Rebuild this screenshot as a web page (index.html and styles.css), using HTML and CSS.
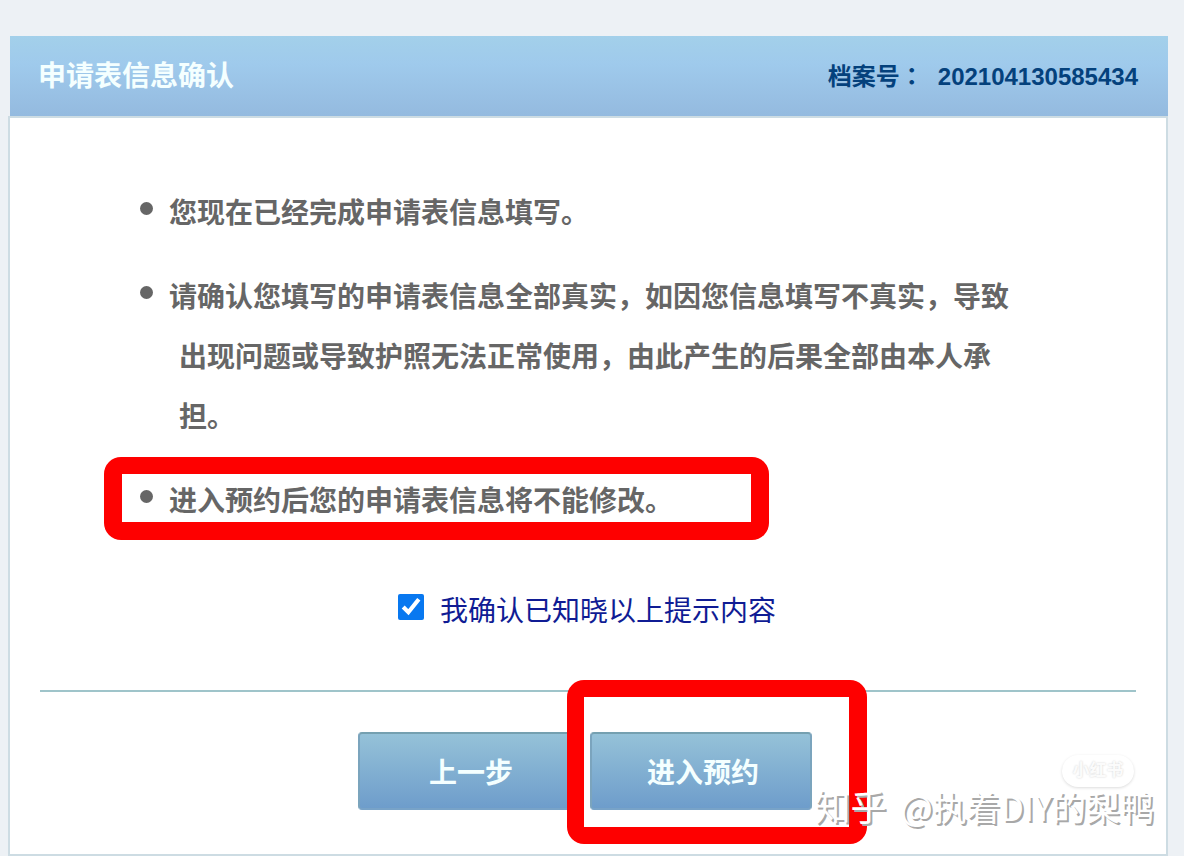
FILE: index.html
```html
<!DOCTYPE html>
<html lang="zh-CN">

<head>
	<meta charset="utf-8">
	<meta name="viewport" content="width=device-width, initial-scale=1">
	<title>申请表信息确认</title>
	<link rel="stylesheet" href="styles.css">
</head>

<body>
	<div class="header">
		<h1>申请表信息确认</h1>
		<div class="fileNo">档案号<span class="colon" lang="zh-TW">：</span>202104130585434</div>
	</div>

	<div class="content">
		<ul class="notice">
			<li>您现在已经完成申请表信息填写。</li>
			<li>请确认您填写的申请表信息全部真实，如因您信息填写不真实，导致出现问题或导致护照无法正常使用，由此产生的后果全部由本人承担。</li>
			<li class="marked">进入预约后您的申请表信息将不能修改。
				<svg class="mark markLine" viewBox="0 0 665 83"><path fill-rule="evenodd" d="M17 0H648A17 17 0 0 1 665 17V66A17 17 0 0 1 648 83H17A17 17 0 0 1 0 66V17A17 17 0 0 1 17 0ZM18 17V65H647V17Z" /></svg>
			</li>
		</ul>

		<div class="confirm">
			<input type="checkbox" id="agree" checked>
			<label for="agree">我确认已知晓以上提示内容</label>
		</div>

		<div class="buttons">
			<button type="button">上一步</button>
			<div class="marked">
				<button type="button">进入预约</button>
				<svg class="mark markButton" viewBox="0 0 300 164"><path fill-rule="evenodd" d="M17 0H283A17 17 0 0 1 300 17V147A17 17 0 0 1 283 164H17A17 17 0 0 1 0 147V17A17 17 0 0 1 17 0ZM17 17V147H282V17Z" /></svg>
			</div>
		</div>

		<div class="badge">小红书</div>
		<div class="watermark"><span class="site">知乎</span>@执着DIY的梨鸭</div>
	</div>
</body>

</html>
```

FILE: styles.css
```css
* {
	box-sizing: border-box;
}

body {
	margin: 36px 16px 0 8px;
	background-color: #edf1f5;
	font-family: "Liberation Sans", "Noto Sans CJK SC", sans-serif;
	font-size: 28px;
	color: #666666;
}

.header {
	display: flex;
	align-items: center;
	justify-content: space-between;
	height: 80px;
	margin-left: 2px;
	padding: 0 30px 0 28px;
	background: linear-gradient(to bottom, #a3d0ea 0%, #9fcaec 35%, #94badf 100%);
}

h1 {
	margin: 0;
	font-size: 28px;
	line-height: 42px;
	padding-top: 2px;
	color: #f4ffff;
}

.fileNo {
	font-size: 24px;
	font-weight: bold;
	line-height: 40px;
	color: #04417c;
}

/* the TC face centres the full-width colon */
.colon {
	margin-right: 14px;
	font-family: "Noto Sans CJK TC", sans-serif;
}

.content {
	position: relative;
	padding: 66px 30px 44px;
	border: 2px solid #cddce3;
	background-color: #ffffff;
}

.notice {
	margin: 0;
	padding: 0 116px 0 139px;
	list-style: none;
	font-weight: bold;
	line-height: 60px;
}

.notice li {
	position: relative;
	margin-bottom: 24px;
	text-indent: -10px;
}

.notice li::before {
	content: "";
	position: absolute;
	top: 18px;
	left: -39px;
	width: 13px;
	height: 13px;
	border-radius: 50%;
	background-color: #666666;
}

.confirm {
	display: flex;
	align-items: center;
	justify-content: center;
	gap: 16px;
	margin-top: 56px;
	padding-right: 2px;
	line-height: 48px;
	color: #101c94;
}

.confirm input {
	width: 26px;
	height: 26px;
	margin: 0 0 10px;
	accent-color: #0878f0;
}

.buttons {
	display: flex;
	justify-content: center;
	gap: 10px;
	margin-top: 54px;
	padding: 40px 6px 0 0;
	border-top: 2px solid #9fc4ca;
}

button {
	display: block;
	width: 222px;
	height: 78px;
	padding: 0 0 0 4px;
	border: 2px solid;
	border-color: #75a0b0 #7ba4bd #78a3c8 #7ba4bd;
	border-radius: 4px;
	background: linear-gradient(to bottom, #95c2d8, #6e9dcb);
	font: bold 28px "Liberation Sans", "Noto Sans CJK SC", sans-serif;
	color: #f4ffff;
	cursor: pointer;
}

.marked {
	position: relative;
}

/* red highlight frames */
.mark {
	position: absolute;
	fill: #fe0000;
	pointer-events: none;
}

.markLine {
	top: -15px;
	left: -75px;
	width: 665px;
	height: 83px;
}

.markButton {
	top: -52px;
	left: -23px;
	width: 300px;
	height: 164px;
}

.badge {
	position: absolute;
	right: 32px;
	bottom: 67px;
	width: 72px;
	border-radius: 16px;
	box-shadow: 0 1px 3px #dcdcdc;
	font-size: 17px;
	font-weight: bold;
	line-height: 32px;
	text-align: center;
	color: #fbfbfb;
	text-shadow: 0 0 2px #d0d0d0;
}

.watermark {
	position: absolute;
	right: 12px;
	bottom: 21px;
	font-family: "Noto Sans CJK SC", sans-serif;
	font-size: 34px;
	line-height: 52px;
	white-space: nowrap;
	color: #ffffff;
	text-shadow: 2px 2px 0 #a8a8a8;
}

.watermark .site {
	margin-right: 14px;
	font-size: 36px;
}
```
